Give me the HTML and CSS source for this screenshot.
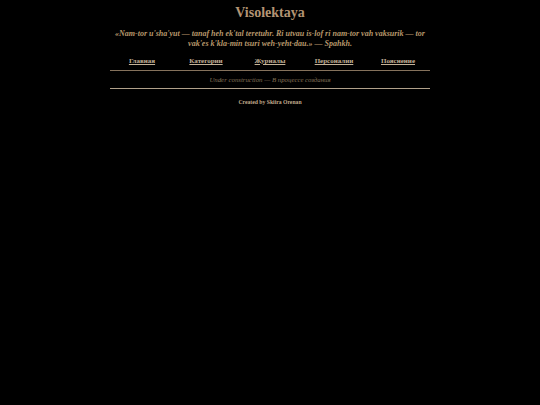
FILE: index.html
```
<!DOCTYPE html>
<html>
<head>
<meta charset="utf-8">
<link rel="stylesheet" href="styles.css">
</head>
<body>
<div class="page">
  <h1 class="title">Visolektaya</h1>
  <p class="quote">«Nam-tor u'sha'yut — tanaf heh ek'tal teretuhr. Ri utvau is-lof ri nam-tor vah vaksurik — tor vak'es k'kla-min tsuri weh-yeht-dau.» — Spahkh.</p>
  <nav class="nav">
    <a href="#">Главная</a>
    <a href="#">Категории</a>
    <a href="#">Журналы</a>
    <a href="#">Персоналии</a>
    <a href="#">Пояснение</a>
  </nav>
  <div class="rule rule-top"></div>
  <p class="status">Under construction — В процессе создания</p>
  <div class="rule rule-bottom"></div>
  <footer class="footer"><a href="#">Created by Skiira Orenan</a></footer>
</div>
</body>
</html>
```
FILE: styles.css
```
html, body {
  margin: 0;
  padding: 0;
  background: #000;
}
body {
  font-family: "Liberation Serif", "Times New Roman", serif;
  color: #b39473;
}
.page {
  width: 320px;
  margin: 0 auto;
  display: flex;
  flex-direction: column;
  align-items: stretch;
}
.title {
  margin: 5px 0 0;
  font-size: 14px;
  line-height: 16px;
  text-align: center;
  color: #b39473;
}
.quote {
  margin: 8px 0 0;
  font-size: 8px;
  line-height: 10px;
  font-style: italic;
  font-weight: bold;
  text-align: center;
  color: #b8986c;
}
.nav {
  display: flex;
  margin-top: 6px;
  height: 12px;
  align-items: center;
}
.nav a {
  flex: 1;
  text-align: center;
  font-size: 7px;
  font-weight: bold;
  color: #c4b298;
}
.rule {
  height: 1px;
}
.rule-top {
  margin-top: 3px;
  background: #85725c;
}
.rule-bottom {
  background: #b0a08a;
}
.status {
  margin: 4px 0 4px;
  font-size: 6.8px;
  line-height: 9px;
  font-style: italic;
  text-align: center;
  color: #857358;
}
.footer {
  margin-top: 10px;
  text-align: center;
  font-size: 5.7px;
  font-weight: bold;
}
.footer a {
  color: #c0aa8c;
}
```
